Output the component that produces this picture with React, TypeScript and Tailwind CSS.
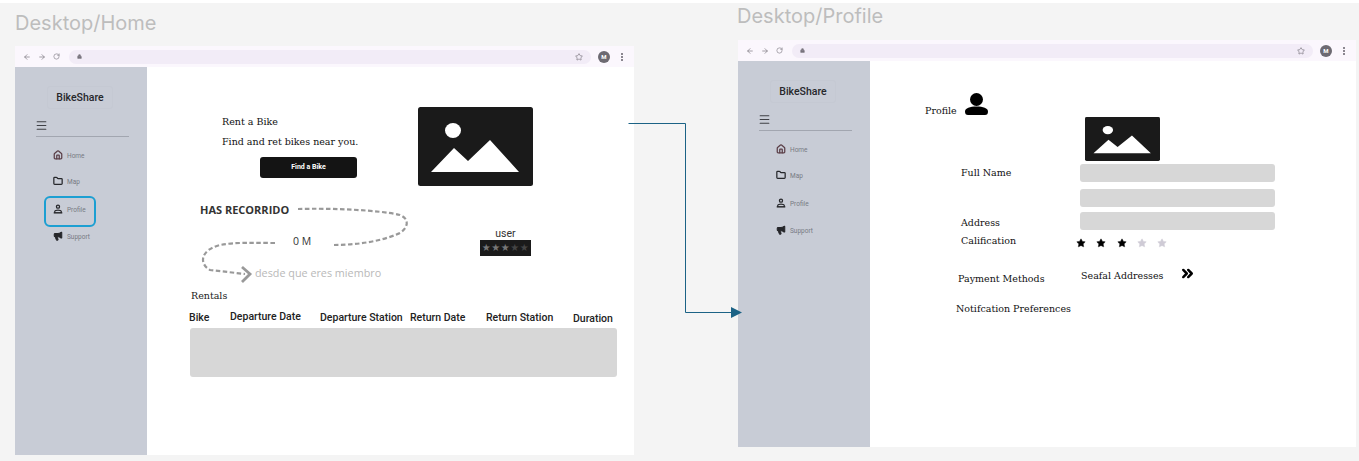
import { ArrowLeft, ArrowRight, ChevronsRight, Folder, House, Lock, Megaphone, Menu, RotateCw, Star } from 'lucide-react';

const SLAB = 'font-["DejaVu_Serif",serif]';

// ── Browser chrome ──
function BrowserBar() {
  return (
    <div className="h-[21px] shrink-0 bg-[#fbf7fd] flex items-center pl-[8px] pr-[11px] text-[#77737c]">
      <ArrowLeft size={8} className="mr-[7px]" />
      <ArrowRight size={8} className="mr-[7px]" />
      <RotateCw size={7} className="mr-[9px]" />
      <div className="flex-1 h-[14px] rounded-full bg-[#f2ecf7] flex items-center justify-between pl-[8px] pr-[8px]">
        <Lock size={5} fill="currentColor" />
        <Star size={8} />
      </div>
      <div className="ml-[7px] w-[12px] h-[12px] rounded-full bg-[#6d6a72] text-white text-[6px] font-bold flex items-center justify-center font-['Roboto',sans-serif]">
        M
      </div>
      <div className="ml-[11px] w-[2px] h-[8px] flex flex-col justify-between">
        <span className="h-[2px] bg-[#8b8790]" />
        <span className="h-[2px] bg-[#8b8790]" />
        <span className="h-[2px] bg-[#8b8790]" />
      </div>
    </div>
  );
}

// ── Sidebar ──
function NavItem({ icon, label, highlighted, className }: { icon: React.ReactNode; label: string; highlighted?: boolean; className: string }) {
  return (
    <div className={`relative flex items-center ml-[38px] h-[10px] text-[#4d4e55] ${className}`}>
      {icon}
      <span className="ml-[4px] mt-[2px] text-[6.5px] leading-[10px] text-[#777a83]">{label}</span>
      {highlighted && (
        <div className="absolute left-[-9px] top-[-8px] w-[52px] h-[31px] rounded-[6px] border-2 border-[#1c9fd2]" />
      )}
    </div>
  );
}

function PersonStandIcon() {
  return (
    <svg viewBox="0 0 11 10" className="w-[10px] h-[10px]" fill="none" stroke="#26272b" strokeWidth="1.4">
      <circle cx="5.5" cy="2.4" r="1.7" />
      <path d="M2.5 7.2 C2.5 5.8 8.5 5.8 8.5 7.2" />
      <path d="M0.8 9.2 H10.2" strokeWidth="1.6" />
      <path d="M2 9 V7 M9 9 V7" />
    </svg>
  );
}

function Sidebar({ highlightProfile }: { highlightProfile?: boolean }) {
  return (
    <div className="w-[132px] shrink-0 bg-[#c8ccd6] font-['Roboto',sans-serif] flex flex-col">
      <div className="mt-[19px] ml-[32px] w-[66px] h-[23px] rounded-[3px] border border-[#c5c9d3] flex items-center justify-center text-[10.5px] font-medium text-[#26272b]">
        BikeShare
      </div>
      <Menu size={13} strokeWidth={2} className="mt-[10px] ml-[20px] text-[#3f4046]" />
      <div className="mt-[4px] mx-[21px] w-[93px] h-px bg-[#a2a6b0]" />
      <NavItem className="mt-[13px]" icon={<House size={10} strokeWidth={3} className="text-[#5b3f48]" />} label="Home" />
      <NavItem className="mt-[16px]" icon={<Folder size={10} strokeWidth={3} className="text-[#26272b]" />} label="Map" />
      <NavItem className="mt-[18px]" highlighted={highlightProfile} icon={<PersonStandIcon />} label="Profile" />
      <NavItem className="mt-[17px]" icon={<Megaphone size={10} strokeWidth={2.5} fill="currentColor" className="text-[#26272b]" />} label="Support" />
    </div>
  );
}

// ── Image placeholder ──
function ImagePlaceholder({ className }: { className: string }) {
  return (
    <svg viewBox="0 0 115 79" preserveAspectRatio="none" className={className}>
      <rect width="115" height="79" rx="2.5" fill="#1a1a1a" />
      <ellipse cx="35" cy="23.5" rx="8" ry="7.5" fill="#fff" />
      <path d="M13 65 L36 41 L50 54 L72 33 L101 65 Z" fill="#fff" />
    </svg>
  );
}

function Frame({ title, titleClass, frameClass, children, highlightProfile }: { title: string; titleClass: string; frameClass: string; children: React.ReactNode; highlightProfile?: boolean }) {
  return (
    <>
      <div className={`absolute text-[20px] leading-none text-[#bdbdbd] font-['Inter',sans-serif] ${titleClass}`}>{title}</div>
      <div className={`absolute flex flex-col bg-white ${frameClass}`}>
        <BrowserBar />
        <div className="flex flex-1 min-h-0">
          <Sidebar highlightProfile={highlightProfile} />
          <div className="flex-1 min-w-0">{children}</div>
        </div>
      </div>
    </>
  );
}

// ── Home ──
const COLUMNS = [
  { label: 'Bike', className: 'w-[41px]' },
  { label: 'Departure Date', className: 'w-[90px] -mt-[1px]' },
  { label: 'Departure Station', className: 'w-[90px]' },
  { label: 'Return Date', className: 'w-[76px]' },
  { label: 'Return Station', className: 'w-[87px]' },
  { label: 'Duration', className: 'mt-[1px]' },
];

function HomeContent() {
  return (
    <div>
      <div className="flex pt-[40px] h-[119px]">
        <div className={`w-[196px] pl-[75px] ${SLAB} text-[#111]`}>
          <p className="mt-[8px] text-[9.5px] leading-[14px] whitespace-nowrap">Rent a Bike</p>
          <p className="mt-[6px] text-[9.5px] leading-[14px] whitespace-nowrap">Find and ret bikes near you.</p>
          <button className="mt-[8px] ml-[38px] w-[97px] h-[21px] rounded-[3px] bg-[#141414] text-white text-[7px] font-bold font-['Roboto',sans-serif]">
            Find a Bike
          </button>
        </div>
        <ImagePlaceholder className="w-[115px] h-[79px] ml-[75px]" />
      </div>

      <div className="flex">
        <div className="relative ml-[53px] w-[210px] h-[85px] font-['Open_Sans',sans-serif]">
          <svg viewBox="0 0 210 85" className="absolute inset-0 w-full h-full overflow-visible" fill="none" stroke="#999" strokeWidth="2.2" strokeDasharray="4.5 2.5">
            <path d="M98 23 C130 22 180 24 200 29 C210 33 208 42 200 47 C180 56 155 59 133 59" />
            <path d="M75 57 C55 57 35 56 20 59 C0 64 -1 78 10 84 L45 88" />
            <path d="M42 81 L50 88 L42 96" strokeDasharray="none" strokeWidth="2.8" />
          </svg>
          <span className="absolute left-0 top-[16px] text-[11px] leading-[16px] font-bold text-[#333] whitespace-nowrap">HAS RECORRIDO</span>
          <span className="absolute left-[93px] top-[48px] text-[10.5px] leading-[14px] text-[#333] font-['Open_Sans',sans-serif]">0 M</span>
        </div>
        <div className="ml-[70px] w-[51px] pt-[42px] flex flex-col items-center">
          <span className="text-[10.5px] leading-[12px] text-[#333] font-['Roboto',sans-serif]">user</span>
          <div className="w-[51px] h-[16px] bg-[#1a1a1a] flex items-center justify-center text-[10px] leading-none tracking-[0.5px] text-[#777] font-['DejaVu_Sans',sans-serif]">
            ★★★<span className="text-[#444]">★★</span>
          </div>
        </div>
      </div>
      <p className="-mt-[5px] ml-[108px] text-[10.8px] leading-[14px] text-[#b9b9b9] font-['Open_Sans',sans-serif]">desde que eres miembro</p>

      <p className={`mt-[9px] ml-[44px] text-[9.5px] leading-[14px] text-[#222] ${SLAB}`}>Rentals</p>
      <div className="mt-[8px] ml-[42px] flex items-start text-[10.5px] leading-[14px] font-medium text-[#222] font-['Roboto',sans-serif] whitespace-nowrap">
        {COLUMNS.map((c) => (
          <span key={c.label} className={c.className}>{c.label}</span>
        ))}
      </div>
      <div className="mt-[2px] ml-[43px] w-[427px] h-[49px] rounded-[3px] bg-[#d7d7d7]" />
    </div>
  );
}

// ── Profile ──
function ProfileContent() {
  return (
    <div className={`${SLAB} text-[#111] text-[9.5px] leading-[14px] whitespace-nowrap`}>
      <div className="flex items-end pt-[32px] ml-[55px] h-[56px]">
        <span className="mb-[-1px]">Profile</span>
        <svg viewBox="0 0 23 22" className="ml-[8px] mb-[2px] w-[23px] h-[22px]" fill="#000">
          <circle cx="11.5" cy="6.5" r="6.5" />
          <path d="M0 18.5 C0 15 5 13.5 11.5 13.5 C18 13.5 23 15 23 18.5 C23 21 22 22 20 22 H3 C1 22 0 21 0 18.5 Z" />
        </svg>
      </div>
      <ImagePlaceholder className="ml-[215px] w-[75px] h-[44px]" />

      <div className="flex mt-[3px]">
        <div className="w-[210px] pl-[91px]">
          <p className="mt-[2px]">Full Name</p>
          <p className="mt-[36px]">Address</p>
          <p className="mt-[4px]">Calification</p>
        </div>
        <div className="flex flex-col">
          <div className="w-[195px] h-[18px] rounded-[3px] bg-[#d7d7d7]" />
          <div className="mt-[7px] w-[195px] h-[18px] rounded-[3px] bg-[#d7d7d7]" />
          <div className="mt-[5px] w-[195px] h-[18px] rounded-[3px] bg-[#d7d7d7]" />
          <div className="mt-[8px] -ml-[4px] flex gap-[10.3px]">
            {[0, 1, 2, 3, 4].map((i) => (
              <Star key={i} size={10} strokeWidth={1} className={i < 3 ? 'fill-black text-black' : 'fill-[#cfcbd6] text-[#cfcbd6]'} />
            ))}
          </div>
        </div>
      </div>

      <div className="flex items-start mt-[21px]">
        <p className="w-[211px] pl-[88px] mt-[3px]">Payment Methods</p>
        <p>Seafal Addresses</p>
        <ChevronsRight size={17} strokeWidth={3.5} className="ml-[16px] -mt-[4px] text-black" />
      </div>
      <p className="mt-[16px] ml-[86px]">Notifcation Preferences</p>
    </div>
  );
}

export default function App() {
  return (
    <div className="relative w-[1359px] h-[461px] overflow-hidden bg-white">
      <div className="absolute left-0 right-0 top-[3px] bottom-0 bg-[#f4f4f4]" />
      <Frame title="Desktop/Home" titleClass="left-[15px] top-[13px]" frameClass="left-[15px] top-[46px] w-[619px] h-[409px]" highlightProfile>
        <HomeContent />
      </Frame>
      <Frame title="Desktop/Profile" titleClass="left-[737px] top-[6px]" frameClass="left-[738px] top-[40px] w-[618px] h-[407px]">
        <ProfileContent />
      </Frame>

      {/* Connector between frames */}
      <svg viewBox="0 0 1359 461" className="absolute inset-0 w-[1359px] h-[461px]" fill="none">
        <path d="M628.5 123.5 H685.5 V312.5 H733" stroke="#1b6285" />
        <path d="M731 307 L742 312.5 L731 318 Z" fill="#1b6285" />
      </svg>
    </div>
  );
}
